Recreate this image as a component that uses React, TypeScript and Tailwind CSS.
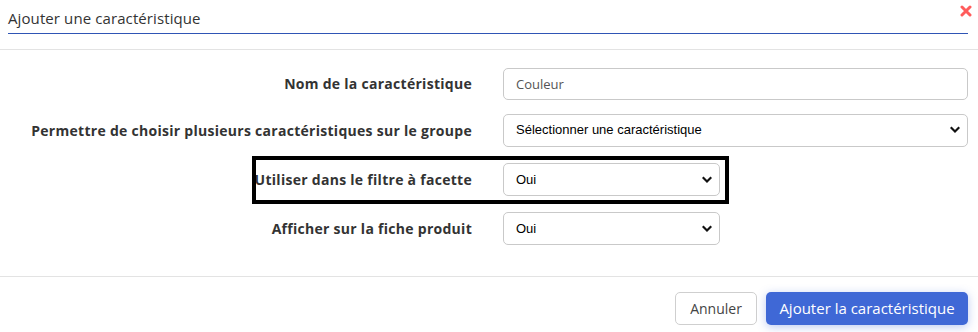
const Chevron = () => (
  <svg className="pointer-events-none absolute right-[8px] top-1/2 -translate-y-1/2 w-[10px] h-[8px]" viewBox="0 0 10 8" fill="none">
    <path d="M1.5 2 L5 5.5 L8.5 2" stroke="#111" strokeWidth={2.2} strokeLinecap="square" />
  </svg>
);

const Select = ({ value, wide }: { value: string; wide?: boolean }) => (
  <div className={`relative h-[33px] ${wide ? "w-[465px]" : "w-[217px]"}`}>
    <select
      defaultValue={value}
      className="appearance-none w-full h-full rounded-[5px] border border-[#c9c9c9] bg-white pl-[12px] pr-6 text-[13px] text-black outline-none"
      style={{ fontFamily: '"Liberation Sans", Arial, sans-serif' }}
    >
      <option>{value}</option>
    </select>
    <Chevron />
  </div>
);

const Label = ({ children }: { children: string }) => (
  <div className="w-[472px] shrink-0 text-right text-[14px] font-bold tracking-[0.28px] text-[#333]">{children}</div>
);

export default function App() {
  return (
    <div className="w-[978px] h-[332px] bg-white overflow-hidden" style={{ fontFamily: '"Open Sans", sans-serif' }}>
      {/* Header */}
      <div className="relative h-[50px] px-[8px] border-b border-[#e3e3e3]">
        <div className="h-[34px] pt-[7px] w-[960px] border-b border-[#2f55b5] text-[15px] tracking-[0.1px] text-[#333]">
          Ajouter une caractéristique
        </div>
        <svg className="absolute right-[6px] top-[5px] w-[12px] h-[12px]" viewBox="0 0 12 12">
          <path d="M2 2 L10 10 M10 2 L2 10" stroke="#ff5c5c" strokeWidth={3} strokeLinecap="round" />
        </svg>
      </div>

      {/* Body */}
      <div className="pt-[17px] pb-[31px] border-b border-[#e3e3e3]">
        <div className="flex items-center gap-[31px] h-[33px]">
          <Label>Nom de la caractéristique</Label>
          <input
            defaultValue="Couleur"
            className="w-[465px] h-[32px] rounded-[5px] border border-[#c9c9c9] px-[12px] text-[13px] text-[#555] outline-none"
          />
        </div>
        <div className="flex items-center gap-[31px] h-[34px] mt-[13px]">
          <Label>Permettre de choisir plusieurs caractéristiques sur le groupe</Label>
          <Select value="Sélectionner une caractéristique" wide />
        </div>
        <div className="relative flex items-center gap-[31px] h-[33px] mt-[16px]">
          <Label>Utiliser dans le filtre à facette</Label>
          <Select value="Oui" />
          <div className="absolute left-[252px] top-[-7px] w-[477px] h-[48px] border-[4px] border-black pointer-events-none" />
        </div>
        <div className="flex items-center gap-[31px] h-[33px] mt-[16px]">
          <Label>Afficher sur la fiche produit</Label>
          <Select value="Oui" />
        </div>
      </div>

      {/* Footer */}
      <div className="flex justify-end gap-[9px] pt-[15px] pr-[10px]">
        <button className="h-[33px] w-[82px] rounded-[5px] border border-[#cfcfcf] bg-white text-[14px] text-[#444]">
          Annuler
        </button>
        <button className="h-[33px] w-[202px] rounded-[5px] bg-[#3f68d6] text-[15px] text-white shadow-[0_2px_10px_rgba(63,104,214,0.35)]">
          Ajouter la caractéristique
        </button>
      </div>
    </div>
  );
}
